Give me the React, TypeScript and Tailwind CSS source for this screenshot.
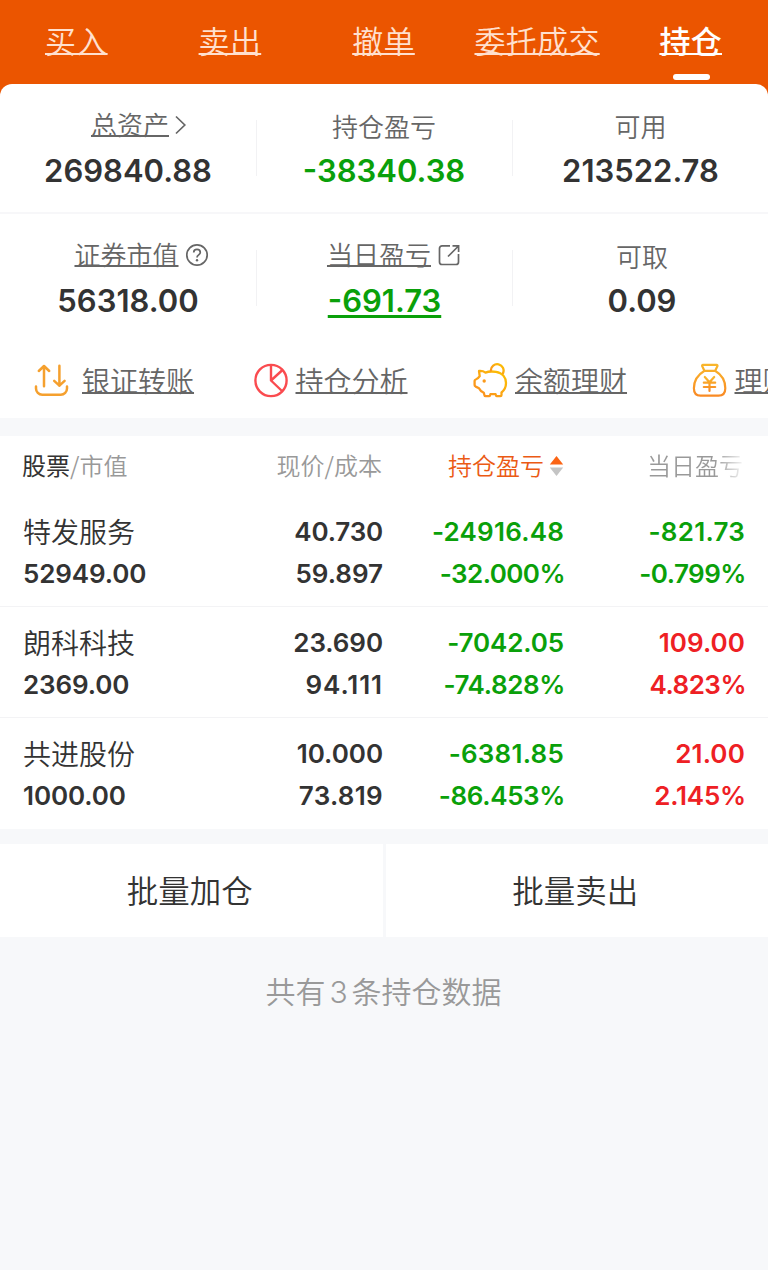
import React from "react";

const CJK = "font-['Noto_Sans_CJK_SC',sans-serif] font-[350]";
const NUM = "font-['Inter','Noto_Sans_CJK_SC',sans-serif] font-semibold";
const UNDERLINE = "underline decoration-2 underline-offset-0 [text-decoration-skip-ink:none]";

const tabs = ["买入", "卖出", "撤单", "委托成交", "持仓"];

function TabBar() {
  return (
    <nav className="grid h-[84px] grid-cols-5 bg-[#eb5500]">
      {tabs.map((tab) => {
        const active = tab === "持仓";
        return (
          <div key={tab} className="flex flex-col items-center pt-[17px]">
            <span
              className={`mr-[1px] h-[46px] text-[31px] leading-[46px] tracking-[0.3px] ${UNDERLINE} font-['Noto_Sans_CJK_SC',sans-serif] ${
                active ? "font-medium text-white" : "font-[350] text-[#ffe0cf]"
              }`}
            >
              {tab}
            </span>
            {active && <span className="mt-[11px] h-[6px] w-[37px] rounded-full bg-white" />}
          </div>
        );
      })}
    </nav>
  );
}

function ChevronIcon() {
  return (
    <svg className="mt-[1px]" width="12" height="20" viewBox="0 0 12 20" fill="none" stroke="#666" strokeWidth="1.7">
      <path d="M1 1.500 9.800 10 1 18.500" />
    </svg>
  );
}

function HelpIcon() {
  return (
    <svg className="mt-[1px]" width="24" height="24" viewBox="0 0 24 24" fill="none" stroke="#666" strokeWidth="1.7">
      <circle cx="12" cy="12" r="10.200" />
      <path d="M8.700 9.600c0-2 1.400-3.200 3.300-3.200s3.300 1.200 3.300 3c0 2.400-3.300 2.500-3.300 5" />
      <circle cx="12" cy="17.300" r="1.200" fill="#666" stroke="none" />
    </svg>
  );
}

function ExternalIcon() {
  return (
    <svg className="mt-[1px]" width="22" height="22" viewBox="0 0 22 22" fill="none" stroke="#666" strokeWidth="1.7">
      <path d="M12 1.900H4A2.500 2.500 0 0 0 1.500 4.400V18A2.500 2.500 0 0 0 4 20.500H18A2.500 2.500 0 0 0 20.500 18V10" />
      <path d="M10 12.500 20.500 2M14.500 1.900H20.600V8" />
    </svg>
  );
}

type StatProps = {
  label: string;
  value: string;
  icon?: React.ReactNode;
  cls?: string;
  green?: boolean;
  linkValue?: boolean;
};

function Stat({ label, value, icon, cls = "", green, linkValue }: StatProps) {
  return (
    <div className={`flex flex-col items-center pt-[22px] ${icon ? "" : cls}`}>
      <div className={`flex h-[40px] items-center ${icon ? `-mt-[2px] mb-[2px] ${cls}` : ""}`}>
        <span className={`text-[26px] leading-[40px] text-[#666] ${CJK} ${icon ? UNDERLINE : ""}`}>{label}</span>
        {icon}
      </div>
      <div
        className={`mt-[4px] text-[31px] leading-[42px] ${NUM} ${green ? "text-[#0aa00a]" : "text-[#333]"} ${
          linkValue ? "underline decoration-[3px] underline-offset-[3px] [text-decoration-skip-ink:none]" : ""
        }`}
      >
        {value}
      </div>
    </div>
  );
}

function StatDivider() {
  return <div className="mt-[36px] h-[56px] w-px bg-[#f2f2f4]" />;
}

const STAT_ROW = "grid h-[130px] grid-cols-[256px_1px_255px_1px_255px]";

function Summary() {
  return (
    <section>
      <div className={`border-b-2 border-[#f7f7f9] ${STAT_ROW}`}>
        <Stat label="总资产" value="269840.88" icon={<ChevronIcon />} cls="gap-[6px] pl-[22px]" />
        <StatDivider />
        <Stat label="持仓盈亏" value="-38340.38" green cls="pr-[1px]" />
        <StatDivider />
        <Stat label="可用" value="213522.78" />
      </div>
      <div className={STAT_ROW}>
        <Stat label="证券市值" value="56318.00" icon={<HelpIcon />} cls="gap-[6px] pl-[27px]" />
        <StatDivider />
        <Stat label="当日盈亏" value="-691.73" icon={<ExternalIcon />} cls="gap-[7px] pl-[18px]" green linkValue />
        <StatDivider />
        <Stat label="可取" value="0.09" cls="pl-[3px]" />
      </div>
    </section>
  );
}

function TransferIcon() {
  return (
    <svg width="36" height="36" viewBox="0 0 36 36" fill="none" stroke="#f5a02e" strokeWidth="2.500" strokeLinecap="round" strokeLinejoin="round">
      <path d="M11 23.200V3M5.800 8 11 3 16.200 8" />
      <path d="M26.400 2.700V22.700M21.200 17.800 26.400 22.700 31.600 17.800" />
      <path d="M3 23.500V25.500A6.200 6.200 0 0 0 9.200 31.700H27.800A6.200 6.200 0 0 0 34 25.500V23.500" />
    </svg>
  );
}

function PieIcon() {
  return (
    <svg width="36" height="36" viewBox="0 0 36 36" fill="none" stroke="#fa4b4f" strokeWidth="2.400" strokeLinejoin="round">
      <circle cx="18" cy="17.500" r="15.600" />
      <path d="M18 2V17.500L29 28M18 17.500 29.500 7" />
    </svg>
  );
}

function PiggyIcon() {
  return (
    <svg width="36" height="36" viewBox="0 0 36 36" fill="none" stroke="url(#piggy)" strokeWidth="2.300" strokeLinejoin="round" strokeLinecap="round">
      <defs>
        <linearGradient id="piggy" x1="1" y1="0" x2="0" y2="1">
          <stop offset="0" stopColor="#fcc300" />
          <stop offset="1" stopColor="#fb8b24" />
        </linearGradient>
      </defs>
      <path d="M7 8C10 7.700 12 8.500 13.500 9.600C16 8.500 20 8.300 24 8.800C30.500 9.800 34 14.500 34 20C34 24 32 27.500 29.500 29.500V32C29.500 32.700 29 33.200 28.300 33.200H25C24.300 33.200 23.900 32.600 23.600 31.200H18.400C18.100 32.600 17.700 33.200 17 33.200H13.700C13 33.200 12.500 32.700 12.400 32L11.800 29.800C9.800 28.900 8 27.300 7 25.200L3.700 23.600C3 23.200 2.600 22.700 2.600 22V17.800C2.600 17.100 3 16.700 3.700 16.500C5.500 15.900 6.700 14.800 7.700 13.200Z" />
      <path d="M18.800 7.600A6.400 6.400 0 1 1 31 10.300" />
      <circle cx="12.200" cy="18" r="1.700" fill="#fb9a1c" stroke="none" />
    </svg>
  );
}

function MoneyBagIcon() {
  return (
    <svg width="36" height="36" viewBox="0 0 36 36" fill="none" stroke="url(#bag)" strokeWidth="2.200" strokeLinejoin="round" strokeLinecap="round">
      <defs>
        <linearGradient id="bag" x1="0" y1="0" x2="0" y2="1">
          <stop offset="0" stopColor="#f9b62b" />
          <stop offset="1" stopColor="#f98a24" />
        </linearGradient>
      </defs>
      <path d="M12.500 7.800C11.500 5.900 10.900 4.500 10.200 3.200C9.900 2.400 10.200 1.900 11 1.900H24.600C25.400 1.900 25.700 2.400 25.400 3.200C24.700 4.500 24.100 5.900 23.100 7.800ZM12.500 7.800C6.300 11.500 1.900 17.500 1.900 25.300C1.900 30.500 4.500 32.700 8.500 32.700H26.500C30.500 32.700 33.300 30.500 33.300 25.300C33.300 17.500 29.300 11.500 23.100 7.800" />
      <path d="M12.800 14 17.500 19.200 22.200 14M17.500 19.200V28M11.800 19.700H23.200M11.800 24H23.200" />
    </svg>
  );
}

const shortcuts = [
  { label: "银证转账", icon: <TransferIcon />, cls: "gap-[13px] pl-[33px]" },
  { label: "持仓分析", icon: <PieIcon />, cls: "gap-[7px] pl-[33px]" },
  { label: "余额理财", icon: <PiggyIcon />, cls: "gap-[7px] pl-[33px]" },
  { label: "理财", icon: <MoneyBagIcon />, cls: "gap-[7px] pl-[33px]" },
];

function Shortcuts() {
  return (
    <div className="flex h-[74px] overflow-hidden">
      {shortcuts.map((s) => (
        <div key={s.label} className={`flex h-[74px] w-[219.500px] shrink-0 items-center ${s.cls}`}>
          {s.icon}
          <span className={`mb-[3px] shrink-0 text-[28px] leading-[42px] text-[#666] ${UNDERLINE} ${CJK}`}>
            {s.label}
          </span>
        </div>
      ))}
    </div>
  );
}

const GRID = "grid grid-cols-[203px_157px_181px_181px] pl-[23px]";

function HoldingsHeader() {
  return (
    <div className={`h-[60px] items-center pb-[2px] text-[24px] leading-[36px] text-[#999] ${GRID} ${CJK}`}>
      <div className="-ml-px">
        <span className="font-normal text-[#333]">股票</span>/市值
      </div>
      <div className="pr-[1px] text-right">现价/成本</div>
      <div className="flex items-center justify-end gap-[5px] text-[#eb5a14]">
        <span>持仓盈亏</span>
        <svg className="mt-[1px]" width="15" height="20" viewBox="0 0 15 20">
          <path d="M7.500 0 14.200 8.500H.8Z" fill="#fb6414" />
          <path d="M7.500 20 14.200 11.500H.8Z" fill="#c4c4c4" />
        </svg>
      </div>
      <div className="flex justify-end pr-[2px]">
        <span className="bg-gradient-to-r from-[#999] from-70% to-[#f4f4f4] bg-clip-text text-transparent">当日盈亏</span>
      </div>
    </div>
  );
}

const holdings = [
  { name: "特发服务", value: "52949.00", price: "40.730", cost: "59.897", pnl: "-24916.48", rate: "-32.000%", day: "-821.73", dayRate: "-0.799%" },
  { name: "朗科科技", value: "2369.00", price: "23.690", cost: "94.111", pnl: "-7042.05", rate: "-74.828%", day: "109.00", dayRate: "4.823%" },
  { name: "共进股份", value: "1000.00", price: "10.000", cost: "73.819", pnl: "-6381.85", rate: "-86.453%", day: "21.00", dayRate: "2.145%" },
];

const tone = (v: string) => (v.startsWith("-") ? "text-[#0aa00a]" : "text-[#ee2024]");

const count = (v: string, ch: string) => v.split(ch).length - 1;

// Evens out the narrow "1" against the wide "0" and "%" so the figures read as regular columns.
function Figure({ value }: { value: string }) {
  const extra = count(value, "1") * 1.8 - count(value, "0") * 0.5 - count(value, "%") * 3;
  return (
    <div
      className={value.endsWith("%") ? "-mr-px" : ""}
      style={{ letterSpacing: `${(extra / value.length).toFixed(2)}px` }}
    >
      {value}
    </div>
  );
}

function Cell({ top, bottom, color }: { top: string; bottom: string; color: string }) {
  return (
    <div className={`text-right whitespace-nowrap ${color}`}>
      <Figure value={top} />
      <Figure value={bottom} />
    </div>
  );
}

function Holdings() {
  return (
    <section className="bg-white">
      <HoldingsHeader />
      {holdings.map((h) => (
        <div
          key={h.name}
          className={`h-[111px] border-b border-[#f3f3f5] pt-[15px] text-[26px] leading-[42px] text-[#333] last:border-0 ${GRID} ${NUM}`}
        >
          <div>
            <div className={`-mt-[1px] mb-[1px] h-[42px] text-[28px] ${CJK}`}>{h.name}</div>
            <Figure value={h.value} />
          </div>
          <Cell top={h.price} bottom={h.cost} color="text-[#333]" />
          <Cell top={h.pnl} bottom={h.rate} color={tone(h.pnl)} />
          <Cell top={h.day} bottom={h.dayRate} color={tone(h.day)} />
        </div>
      ))}
    </section>
  );
}

export default function App() {
  return (
    <main className="h-[1270px] w-[768px] overflow-hidden bg-[#f7f8fa]">
      <TabBar />
      <div className="bg-[#eb5500]">
        <div className="overflow-hidden rounded-t-[12px] bg-white">
          <Summary />
          <Shortcuts />
        </div>
      </div>
      <div className="h-[18px]" />
      <Holdings />
      <div className={`mt-[15px] grid h-[93px] grid-cols-2 gap-[3px] text-[31.500px] leading-[90px] text-[#333] ${CJK}`}>
        <button className="bg-white pr-[3px] pb-[3px]">批量加仓</button>
        <button className="bg-white pr-[3px] pb-[3px]">批量卖出</button>
      </div>
      <p className={`mt-[31px] pr-[1px] text-center text-[30px] leading-[44px] text-[#999] ${CJK}`}>
        共有<span className="px-[4px] font-['Inter',sans-serif]">3</span>条持仓数据
      </p>
    </main>
  );
}
